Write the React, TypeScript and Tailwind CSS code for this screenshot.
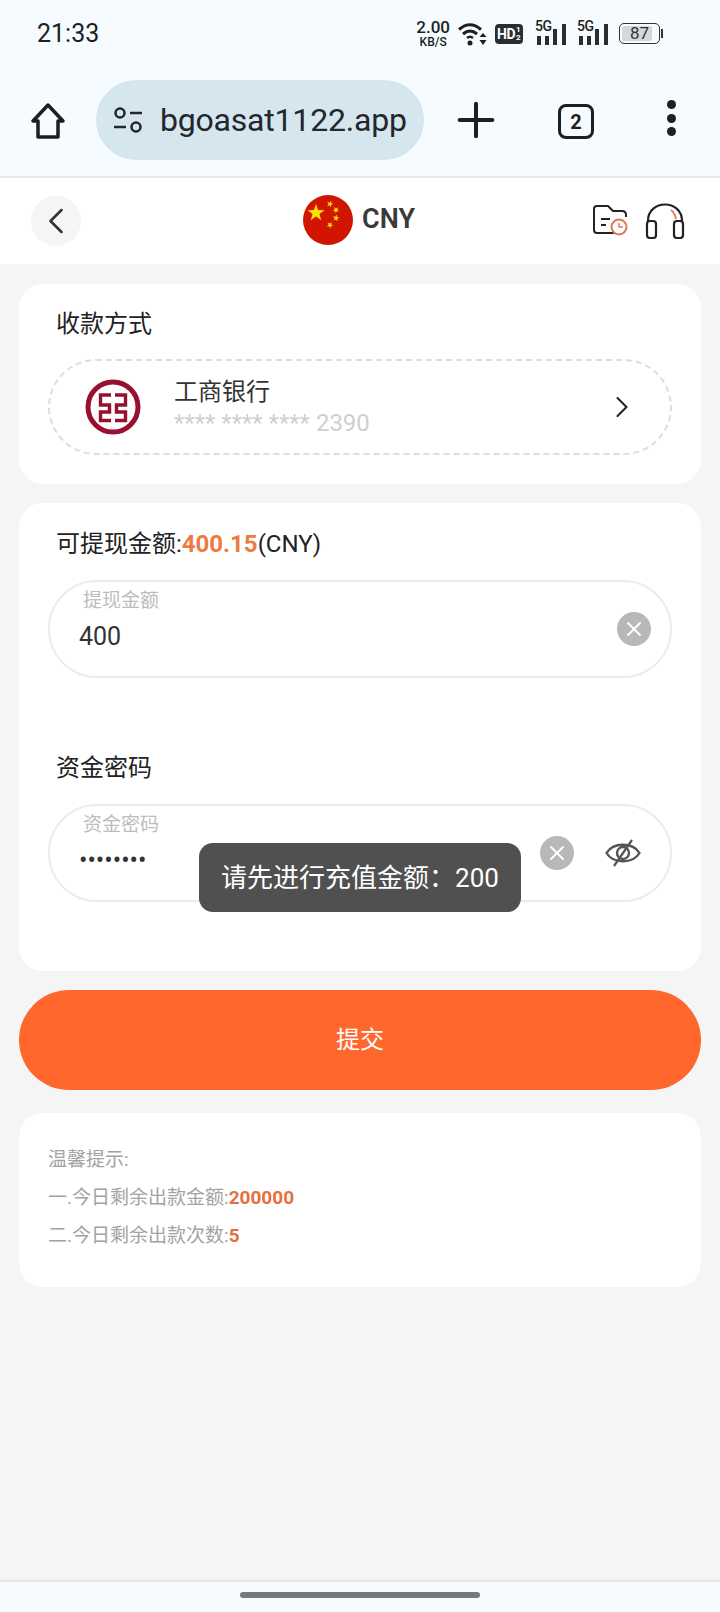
import { ChevronLeft, ChevronRight, Plus, X } from "lucide-react";

const font = { fontFamily: '"Roboto", "Noto Sans CJK SC", sans-serif' };

function SignalIcon() {
  return (
    <div className="relative w-[33px] h-[26px]">
      <span className="absolute left-0 top-[-2px] text-[14px] leading-[14px] font-medium tracking-[-0.5px] text-[#222]">5G</span>
      <svg width="33" height="26" viewBox="0 0 33 26" className="absolute inset-0">
        <rect x="2" y="15" width="4" height="9" fill="#2a2d30" />
        <rect x="10" y="15" width="4" height="9" fill="#2a2d30" />
        <rect x="18" y="8" width="4" height="16" fill="#2a2d30" />
        <rect x="27" y="3" width="4" height="21" fill="#2a2d30" />
      </svg>
    </div>
  );
}

function StatusBar() {
  return (
    <div className="h-[66px] flex items-center justify-between pl-[37px] pr-[57px] pt-[1px]">
      <span className="text-[25px] leading-none text-[#1c1f22]">21:33</span>
      <div className="flex items-center">
        <div className="flex flex-col items-center text-[#1c1f22] mr-[7px]">
          <span className="text-[17px] leading-[17px] font-medium">2.00</span>
          <span className="text-[12px] leading-[12px] font-medium">KB/S</span>
        </div>
        <svg width="30" height="26" viewBox="0 0 30 26" fill="none" className="mr-[8px]">
          <path d="M2 8.5 Q13 -1 24 8.5" stroke="#1c1f22" strokeWidth="3" />
          <path d="M6 13 Q13 7 20 13" stroke="#1c1f22" strokeWidth="3" />
          <path d="M10 17 Q13 14.500 16 17" stroke="#1c1f22" strokeWidth="2.500" />
          <circle cx="13" cy="22" r="2.500" fill="#1c1f22" />
          <path d="M26 12 L29.500 16 H22.500 Z M26 24 L29.500 19 H22.500 Z" fill="#1c1f22" />
        </svg>
        <div className="w-[28px] h-[20px] rounded-[4px] bg-[#2a2d30] flex items-center pl-[2px] text-white font-bold leading-none mr-[12px]">
          <span className="text-[14px] tracking-[-0.5px]">HD</span>
          <span className="flex flex-col text-[8px] leading-[8px] ml-[1px]">
            <span>1</span>
            <span>2</span>
          </span>
        </div>
        <div className="flex gap-[9px] mr-[9px]">
          <SignalIcon />
          <SignalIcon />
        </div>
        <div className="w-[41px] h-[21px] rounded-[5px] border border-[#333] p-[2px] relative">
          <div className="h-full w-[87%] bg-[#d3d8dc] rounded-[2px]" />
          <span className="absolute inset-0 flex items-center justify-center text-[17px] text-[#333] leading-none">87</span>
        </div>
        <div className="w-[2px] h-[9px] bg-[#333] ml-[1px]" />
      </div>
    </div>
  );
}

function BrowserBar() {
  return (
    <div className="h-[112px] flex items-start pl-[30px] border-b-2 border-[#e2e9ed]">
      <svg width="36" height="38" viewBox="0 0 36 38" fill="none" className="mt-[36px]">
        <path d="M18 3 L33 19 H28 V35 H8 V19 H3 Z" stroke="#1c1f22" strokeWidth="3.500" strokeLinejoin="round" />
      </svg>
      <div className="ml-[30px] mt-[14px] w-[328px] h-[80px] rounded-full bg-[#d6e6ef] flex items-center pl-[17px]">
        <svg width="30" height="28" viewBox="0 0 30 28" fill="none">
          <circle cx="7" cy="7" r="4.500" stroke="#22272b" strokeWidth="2.500" />
          <path d="M17 7 H29" stroke="#22272b" strokeWidth="2.500" />
          <path d="M1 21 H13" stroke="#22272b" strokeWidth="2.500" />
          <circle cx="23" cy="21" r="4.500" stroke="#22272b" strokeWidth="2.500" />
        </svg>
        <span className="ml-[17px] text-[32px] leading-none text-[#22272b] tracking-[-0.2px]">bgoasat1122.app</span>
      </div>
      <Plus size={56} strokeWidth={1.700} className="ml-[24px] mt-[26px] text-[#1c1f22]" />
      <div className="ml-[54px] mt-[38px] w-[36px] h-[35px] rounded-[8px] border-[3.500px] border-[#1c1f22] flex items-center justify-center text-[20px] font-bold leading-none text-[#1c1f22]">
        2
      </div>
      <div className="ml-[73px] mt-[34px] flex flex-col gap-[4.500px]">
        <span className="w-[9px] h-[9px] rounded-full bg-[#1c1f22]" />
        <span className="w-[9px] h-[9px] rounded-full bg-[#1c1f22]" />
        <span className="w-[9px] h-[9px] rounded-full bg-[#1c1f22]" />
      </div>
    </div>
  );
}

function Star({ x, y, r, rot = 0 }: { x: number; y: number; r: number; rot?: number }) {
  const points = Array.from({ length: 10 }, (_, i) => {
    const a = ((i * 36 - 90 + rot) * Math.PI) / 180;
    const d = i % 2 === 0 ? r : r * 0.4;
    return `${x + d * Math.cos(a)},${y + d * Math.sin(a)}`;
  }).join(" ");
  return <polygon points={points} fill="#ffe000" />;
}

function Flag() {
  return (
    <svg width="50" height="50" viewBox="0 0 50 50">
      <circle cx="25" cy="25" r="25" fill="#d01600" />
      <Star x={13} y={18} r={9} />
      <Star x={27} y={9} r={3.500} rot={20} />
      <Star x={33} y={15} r={3.500} rot={40} />
      <Star x={33} y={23} r={3.500} rot={10} />
      <Star x={27} y={30} r={3.500} rot={30} />
    </svg>
  );
}

function Header() {
  return (
    <div className="h-[86px] bg-white flex items-center pl-[31px] pr-[35px] shrink-0">
      <div className="w-[50px] h-[50px] rounded-full bg-[#f5f5f5] flex items-center justify-center -mt-[1px]">
        <ChevronLeft size={44} strokeWidth={1.400} className="text-[#333]" />
      </div>
      <div className="ml-[222px] flex items-center -mt-[3px]">
        <Flag />
        <span className="ml-[9px] text-[27px] font-semibold text-[#3a3a3a] leading-none">CNY</span>
      </div>
      <div className="ml-auto flex items-center gap-[16px]">
        <svg width="36" height="32" viewBox="0 0 36 32" fill="none">
          <path d="M27 28 H4 Q1 28 1 25 V4 Q1 1 4 1 H15 L20 6 H29 Q33 6 33 10 V12" stroke="#222" strokeWidth="2" />
          <path d="M8 14 H17 M8 20 H13" stroke="#222" strokeWidth="2" />
          <circle cx="26" cy="22" r="7.500" fill="#fff" stroke="#e07a55" strokeWidth="2" />
          <path d="M26 18 V22 H30" stroke="#e07a55" strokeWidth="1.500" />
        </svg>
        <svg width="40" height="37" viewBox="0 0 40 37" fill="none" className="-mt-[1px]">
          <path d="M3 20 V19 C3 -3 37 -3 37 19 V20" stroke="#222" strokeWidth="2.200" />
          <rect x="2" y="19" width="9" height="17" rx="3" stroke="#222" strokeWidth="2.200" />
          <rect x="29" y="19" width="9" height="17" rx="3" stroke="#222" strokeWidth="2.200" />
          <path d="M26 8 Q30 11 31 17" stroke="#e07a55" strokeWidth="1.800" />
        </svg>
      </div>
    </div>
  );
}

function BankLogo() {
  return (
    <svg width="56" height="56" viewBox="0 0 56 56" fill="none">
      <circle cx="28" cy="28" r="25" stroke="#98102f" strokeWidth="5" />
      <path
        d="M26 16 H15.500 V26 H24.500 V33 H15.500 V41.500 H26 M30 16 H40.500 V26 H31.500 V33 H40.500 V41.500 H30"
        stroke="#98102f"
        strokeWidth="3.400"
      />
    </svg>
  );
}

function ClearButton() {
  return (
    <div className="w-[34px] h-[34px] rounded-full bg-[#b8b8b8] flex items-center justify-center">
      <X size={24} strokeWidth={2} className="text-white" />
    </div>
  );
}

function EyeOff() {
  return (
    <svg width="36" height="30" viewBox="0 0 36 30" fill="none">
      <path d="M1.500 15 C8 4 28 4 34.500 15 C28 26 8 26 1.500 15 Z" stroke="#555" strokeWidth="2.400" />
      <circle cx="18" cy="15" r="6" stroke="#555" strokeWidth="2.400" />
      <path d="M27 2 L9 28" stroke="#555" strokeWidth="2.200" />
    </svg>
  );
}

export default function App() {
  return (
    <div className="relative w-[720px] h-[1612px] flex flex-col bg-[#f5f5f5] overflow-hidden" style={font}>
      <div className="bg-[#f5fbff] shrink-0">
        <StatusBar />
        <BrowserBar />
      </div>
      <Header />

      <div className="flex-1 px-[19px]">
        {/* 收款方式 */}
        <div className="mt-[20px] h-[200px] rounded-[24px] bg-white pt-[24px] px-[29px]">
          <div className="pl-[8px] text-[24px] leading-[32px] text-[#222]">收款方式</div>
          <div className="mt-[19px] h-[96px] rounded-full border-2 border-dashed border-[#dedede] flex items-center pl-[35px] pr-[30px]">
            <BankLogo />
            <div className="ml-[33px] flex flex-col">
              <span className="text-[24px] leading-[32px] text-[#333]">工商银行</span>
              <span className="text-[24px] leading-[30px] text-[#cfcfcf]">**** **** **** 2390</span>
            </div>
            <ChevronRight size={36} strokeWidth={1.400} className="ml-auto text-[#222]" />
          </div>
        </div>

        {/* 提现 */}
        <div className="mt-[19px] h-[468px] rounded-[24px] bg-white pt-[25px] px-[29px]">
          <div className="pl-[8px] text-[24px] leading-[32px] text-[#222]">
            可提现金额:<span className="font-bold text-[#ee7a41]">400.15</span>(CNY)
          </div>
          <div className="mt-[20px] h-[98px] rounded-full border-2 border-[#ececec] flex items-center pr-[19px]">
            <div className="flex-1 self-start flex flex-col pl-[29px] pt-[7px]">
              <span className="pl-[4px] text-[19px] leading-[24px] text-[#bdbdbd]">提现金额</span>
              <span className="mt-[8px] text-[25px] leading-[32px] text-[#333]">400</span>
            </div>
            <ClearButton />
          </div>

          <div className="mt-[74px] pl-[8px] text-[24px] leading-[32px] text-[#222]">资金密码</div>
          <div className="mt-[20px] h-[98px] rounded-full border-2 border-[#ececec] flex items-center pr-[29px]">
            <div className="flex-1 self-start flex flex-col pl-[29px] pt-[7px]">
              <span className="pl-[4px] text-[19px] leading-[24px] text-[#bdbdbd]">资金密码</span>
              <span className="mt-[8px] text-[25px] leading-[32px] text-[#333]">••••••••</span>
            </div>
            <ClearButton />
            <div className="ml-[31px]">
              <EyeOff />
            </div>
          </div>
        </div>

        <button className="mt-[19px] w-full h-[100px] rounded-full bg-[#ff672c] text-white text-[24px]">提交</button>

        {/* 温馨提示 */}
        <div className="mt-[23px] h-[174px] rounded-[24px] bg-white pt-[28px] pl-[29px] text-[19px] leading-[38px] text-[#a3a3a3]">
          <div>温馨提示:</div>
          <div>
            一.今日剩余出款金额:<span className="font-bold text-[#e5703f]">200000</span>
          </div>
          <div>
            二.今日剩余出款次数:<span className="font-bold text-[#e5703f]">5</span>
          </div>
        </div>
      </div>

      <div className="h-[32px] shrink-0 bg-[#f5fbff] border-t-2 border-[#e2e9ed] flex justify-center pt-[10px]">
        <div className="w-[240px] h-[6px] rounded-full bg-[#75797c]" />
      </div>

      {/* toast */}
      <div className="absolute left-[199px] top-[843px] w-[322px] h-[69px] rounded-[14px] bg-[#505050] flex items-center justify-center text-white text-[26px] leading-none">
        请先进行充值金额：200
      </div>
    </div>
  );
}
